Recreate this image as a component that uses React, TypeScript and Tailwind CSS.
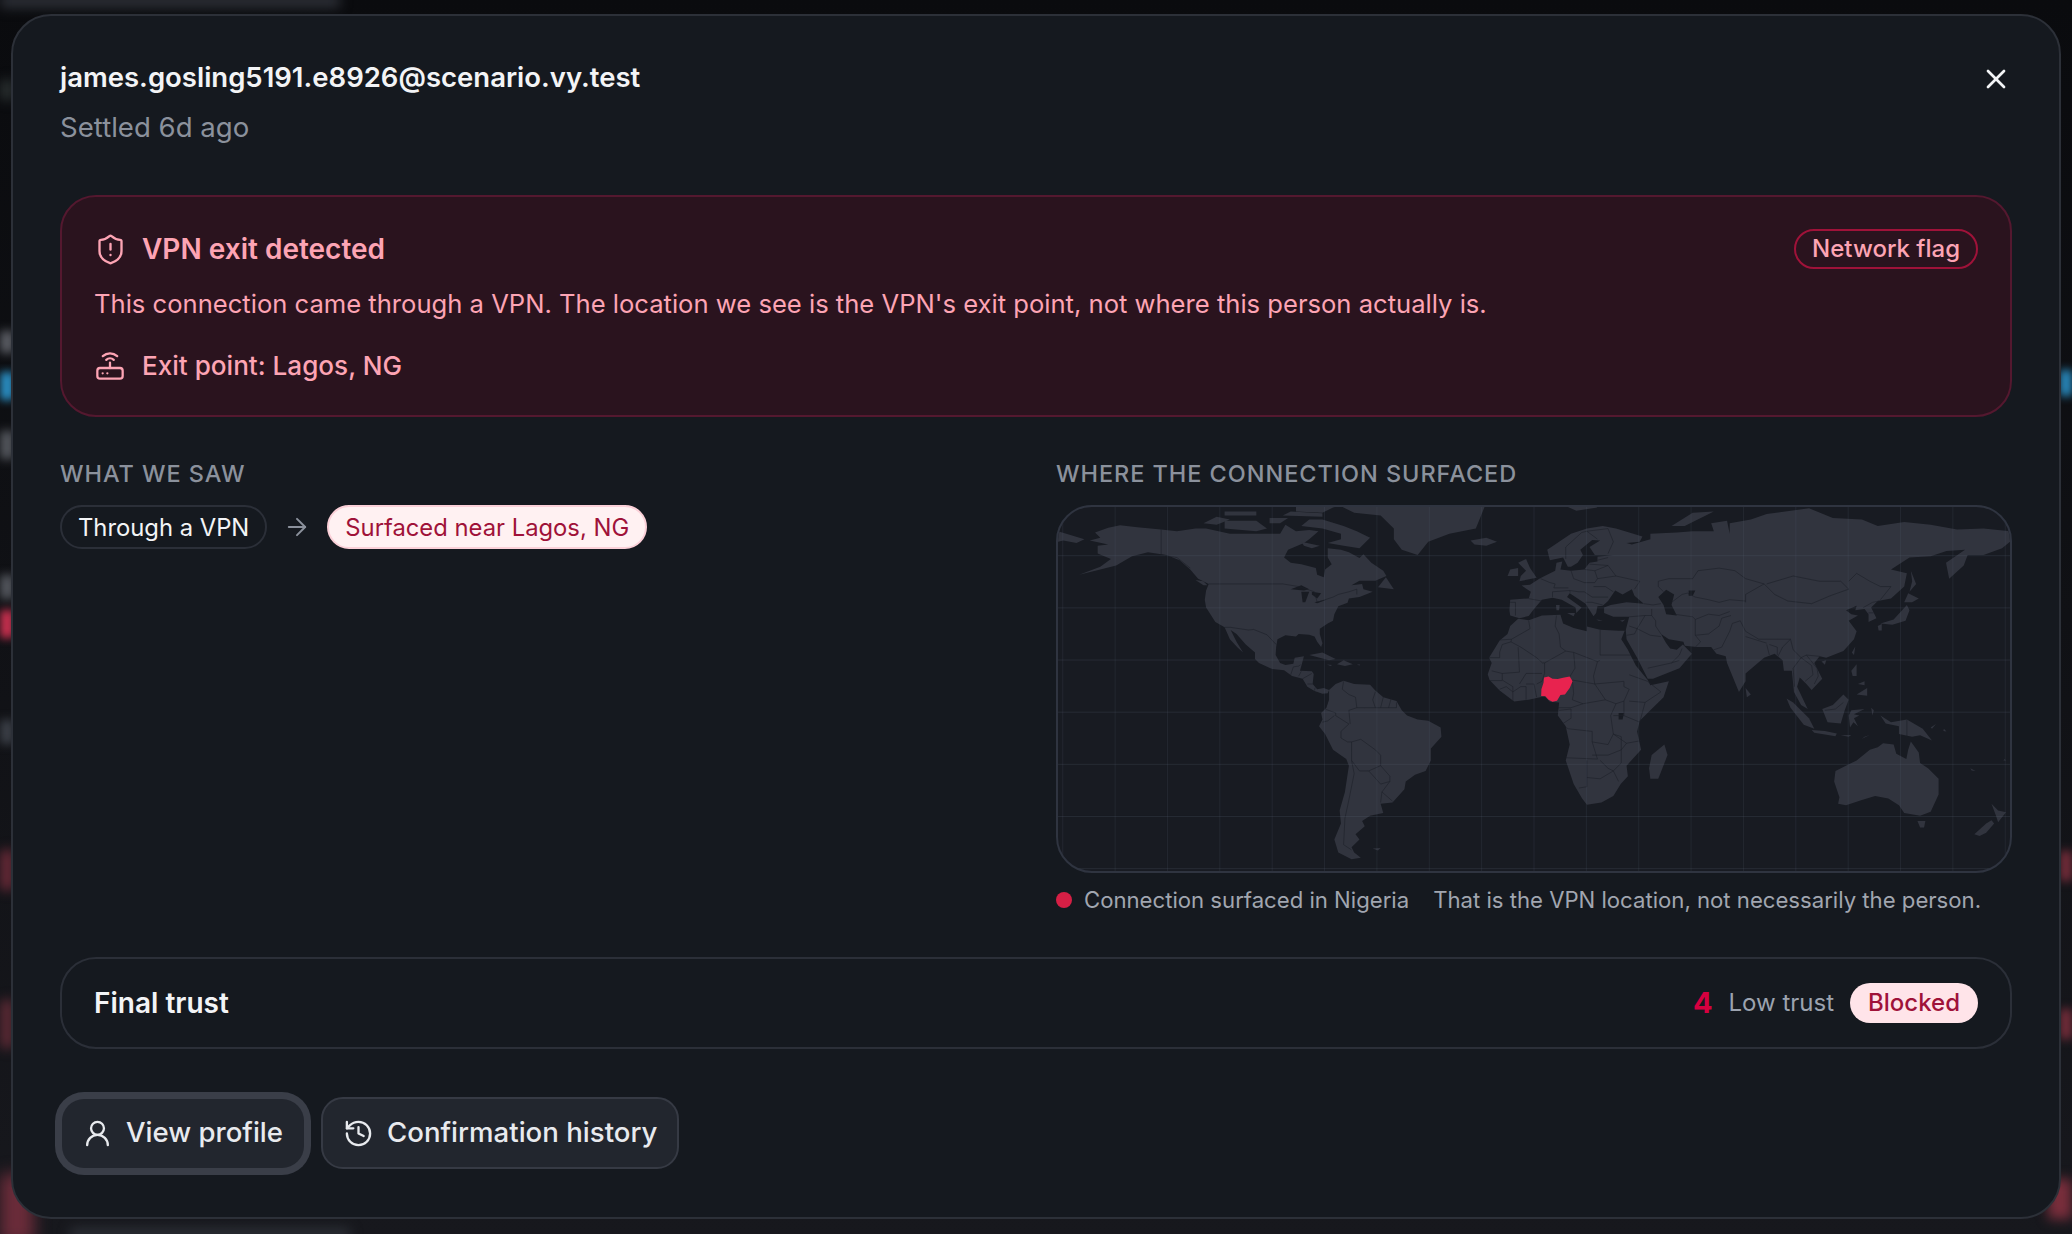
import React from "react";
import { X, ShieldAlert, ArrowRight, UserRound, History } from "lucide-react";

const LAND: string[] = [
  // North America
  "-168,65.5 -164,66.5 -166,68.5 -161,70.3 -156.5,71.3 -150,70.5 -141,69.7 -135,69 -128,70 -124,70 -115,68 -108,68 -96,68 -94,71.5 -90,69 -85,69.5 -81.5,69 -85,66 -87,64.5 -93,62 -94.5,59 -92,57 -88,56.5 -82.5,55 -82,52.5 -79.5,51.5 -79,54.5 -76.5,56.5 -78,59 -78,62.5 -73,62 -70,61 -66,58.8 -64.5,60.3 -61.5,57 -57,54 -55.8,52 -60,50.2 -66,50.2 -69,48.5 -65,49 -64.5,47 -61,46 -66,44 -70,43.5 -70.5,41.8 -74,40.5 -75.5,37.5 -76,35 -78,34 -81,32 -81,30 -80,26.5 -80.5,25 -82,27 -83,29 -85,29.7 -89,30 -90,29 -94,29.5 -97,28 -97.5,25 -97.7,22 -96,19 -94,18.2 -91,18.7 -90.5,21 -87,21.5 -87.8,18.5 -88.5,16 -84,15.8 -83.3,14.8 -83.7,11 -82,9 -79.5,9.5 -77.5,8.7 -78,7.5 -80,7.3 -83,8.3 -85.7,10 -87.5,13 -91.5,14 -94.5,16.2 -99,16.7 -104,19 -105.5,20.5 -105.5,23 -109,26 -112.5,30 -114.7,31.5 -112.5,27 -110,23 -112,24.8 -115,28 -117,32.5 -120.5,34.5 -124,40 -124.5,43 -124,46.5 -123,49 -127,51 -130,54.5 -134,58 -139,60 -146,61 -152,59.5 -158,56 -164,54.5 -172,52.5 -164,55.5 -160,58.5 -165,60.5 -165,63.5 -161,64",
  // Chukotka wrap
  "-180,69 -175,67.5 -170,66 -173,64.5 -178,65.5 -180,65",
  // Greenland
  "-73,78.5 -68,76 -58,75 -53,70 -53,66 -50,62 -44,60 -40,65 -32,68 -22,70 -20,75 -18,80 -30,83 -60,82",
  // Arctic Canada
  "-80,73.5 -72,71 -67,69 -62,66.5 -66,62.5 -72,63.5 -78,64.5 -73,66 -73,68 -80,70 -88,71 -85,73.5",
  "-117,70 -105,69 -101,70 -105,73 -117,73",
  "-90,76.5 -80,76 -76,78 -65,81 -75,83 -90,82",
  "-95,75 -80,74.5 -80,75.8 -92,76.5",
  "-125,72 -120,71.5 -115,73.5 -120,74.5",
  "-117,75 -105,75 -105,76.5 -117,76.5",
  "-100,72 -96,72 -93,74 -100,74",
  "-88,65 -81,63.5 -84,62.5 -87,63.5",
  "-59,47.7 -56,51.5 -53,47",
  "-128,50.5 -125,50 -123.5,48.5 -125,48.5",
  // Caribbean
  "-85,22 -80,23 -75,20.5 -77.5,20",
  "-74.5,18.5 -72,20 -68.5,18.5 -71.5,17.8",
  "-78.3,18.4 -76.3,18.2 -77,17.8",
  "-67,18.4 -65.7,18.4 -66,18",
  // Iceland
  "-24,65.5 -18,66.5 -14,65 -18,63.5 -22.5,64",
  // South America
  "-77.5,8.7 -75,11 -72,12.2 -68,11 -62,10.7 -60,8.5 -57,6 -52,4.5 -50,1 -48,-1 -44,-2.5 -40,-3 -35.3,-5.5 -35,-9 -39,-13.5 -39,-18 -41,-22 -45,-23.5 -48.5,-26 -49,-29 -53.5,-34 -58,-34.5 -57,-38 -62,-39 -65,-41 -64,-43 -67.5,-46 -66,-48 -69,-51 -68,-53 -65.5,-55 -69,-55.5 -74,-53 -75.5,-48 -73,-42 -73.5,-37 -71.5,-30 -70,-20 -71,-17.5 -76,-14 -79,-8 -81.3,-5 -80,-2.5 -80.5,0 -78.5,2 -77.5,5",
  "-61,-51.5 -58,-51.3 -59,-52.2",
  // Africa
  "-6,35.8 -2,35.2 3,37 10,37.3 11,34 15,32.3 20,31 20,32.8 25,31.6 32,31.2 34.3,31.2 33,28 35.5,24 37,21 38.5,18 43,12.5 44,10.5 51,12 49,6 44,1 40,-3 39,-7 40.5,-14 35,-20 35.5,-24 32.8,-27 30,-31.5 25.5,-34 20,-34.8 18.2,-32.5 15,-27 12,-18 13.5,-12 12,-5 9,-1 9.5,4 6,4.3 4,6.3 -2,5 -7.5,4.4 -13,8.5 -16.8,12.5 -17.5,14.7 -16,19 -17,21 -13,27.5 -10,30 -9,33",
  // Madagascar
  "49.3,-12 50.5,-16 47,-25 44,-25 43.5,-21 44.5,-16",
  // Eurasia
  "-9,37 -9.3,39 -9,43 -2,43.5 -1.2,46 -4.7,48.4 -1.5,48.7 2,51 4,52 8,54 8.5,57 10.7,57.5 10,54.5 14,54 19,54.5 21,57 24,57.5 24,59.3 30,60 23,60 21,63 25,65.5 22,65.7 17.5,62 18.5,60 16.5,57 14,55.5 12.8,55.5 11,59 6,58 5,62 14,68 20,70 26,71 31,70 41,67 40,65 35,64.5 37,64 44,66 44,68 54,68.5 60,69 68,69 67,72 73,73 74,68 74,72 82,73.5 88,75.5 104,77.7 113,74 124,73.5 130,71 140,72.5 150,71.5 160,69.7 170,70 180,69 180,65 177,62.5 170,60 164,60 162.5,56 157,51 155.8,57 163,62 156,61.5 150,59.5 142,59 135,54.5 141,53 140,48 135,43.5 130,42.5 127.5,40 129.5,36 126.5,34.5 126.5,37.5 125,39.5 121.5,39 122,40.7 118,39 120,37.5 122.5,37 119,35 122,31 121,28 117,23.5 110.5,21 108,21.5 106,19 109,13 105,8.7 103,11 100.5,13.5 99.5,10 103.5,1.5 101,3 98.3,8 97.5,16 94.5,16 94,20 91,22.5 87,21 80,15 80,12 77.5,8 73,19 72.5,21.5 69,22.5 67,25 61.5,25 57,25.5 56.5,27 51,28 48,30 50,26.5 51.5,24.5 54,24 56.3,26 59.7,22.5 55,17 45,13 43,13 39,21 35,28 34.7,31.5 36,36.5 30,36.5 26.5,38 26.5,40 29,41 35,42 41.5,41.5 38,44.5 37,47 33.5,45 30.7,46.5 28,42.5 26,40.7 24,40.5 23.5,38 22.5,36.7 19.5,41.5 13.5,45.5 12.5,44 18,40 16,38 15.7,40 10.5,43 7,43.7 3,43 0,39.5 -2,36.8 -5.5,36",
  // Europe islands
  "-5.5,50 1,51.3 -1.5,55 -3,58.5 -6,57 -3,54 -5,52",
  "-10,52 -6,52 -6,55 -9,54.5",
  "12.5,38 15.5,38 15,36.7",
  "8.3,41 9.7,41 9.5,39 8.5,39",
  "23.5,35.5 26,35.2 24.5,35",
  "32.5,35 34.5,35.5 33.5,34.6",
  "11,79 16,76.8 24,78 20,80",
  "52,71 57,71 68,76.5 60,76",
  // East Asia islands
  "131,34 136,35.5 141,41 142,39 140.5,35 135.5,33.5",
  "130,33 131.5,33.8 131.5,31.3 130.3,31.3",
  "140,42 141.5,45.5 145.5,43.5 143,42",
  "142,46 143,50 142.5,54 144.5,49",
  "120.2,23 121.5,25.2 121,22",
  "108.7,19.5 110.5,20 110,18.3",
  "120,16 122,18.5 122,14 120.5,14",
  "122,7 126,9.5 126,6.5",
  "122.5,11 125,12 125,10.5",
  "80,9.5 82,7 80.5,6",
  // Maritime SE Asia
  "109,1.5 113,3 117,7 119,5 117.5,1 116,-4 111,-3.5",
  "95.5,5.5 98,4 104,-2 106,-6 102,-4.5 97,2",
  "105,-6.5 110,-6.8 114.5,-7.8 114,-8.8 106,-7.5",
  "119.5,-5.5 119,-1 120,1 125,1.5 121,-0.5 123,-1 121,-2 122.5,-5 120.8,-3.5",
  "131,-1 135,-3.5 141,-2.5 147,-6 150.5,-10.5 146,-8.5 143,-9 138,-8 138,-5 133,-4",
  "124,-9.8 127,-8.4 125,-9",
  "116,-8.5 120,-8.4 119,-9",
  "127.5,2 128.5,1 128,-1",
  "150,-5.5 152,-4.2 150.5,-6",
  "155,-6 156,-7 154.8,-6.8",
  // Oceania
  "114,-22 113.5,-26 115.5,-32 115,-34.5 118,-35 124,-33 129,-31.5 134,-32.5 138,-35 140,-38 146,-39 150,-37.5 153,-31 153,-25 149,-21 146,-19 145.5,-15 142.5,-10.8 141.5,-14 140.8,-17.5 137,-15.5 136,-12 132,-11.5 130,-13 127,-14 122,-18 117,-20.5",
  "145,-41 148,-41 147.5,-43.5 146,-43.5",
  "166.5,-46 171,-42 173,-40.7 174,-42 171,-45.5 168.5,-46.7",
  "173,-34.5 175.5,-37 178.5,-37.7 175.5,-41.5 174.7,-39",
  "178,-17.5 178.5,-18 177.5,-18",
  "165,-21 167,-22 165.5,-21.8",
];

const LAKES: string[] = [
  "50,46.8 53,45 52,41 54,37 50,37.5 49,41 47,44",
  "58.5,46.5 61,46.5 60,44.5 58.5,44.5",
  "-92,47 -88,48.5 -85,47 -87,46.5",
  "-88,46 -85,46 -86.5,42 -87.5,42",
  "-84,46 -80.5,45.5 -82,43.5 -84,45",
  "-83,42 -79,43 -79,42.8 -82,41.7",
  "32,0 34,0 33.5,-2.5 32,-2.5",
];

const BORDERS: string[] = [
  "-123,49 -95,49 -89,48 -83,46 -82,42 -76,44 -74,45 -70,46 -67,47 -67,45",
  "-141,69.7 -141,60 -135,59 -130,55",
  "-117,32.5 -114.7,32.5 -108,31.5 -106,31.7 -101,29.7 -97.5,26",
  "-92,14.5 -91,17.5 -89,17.8 -88.3,18.3",
  "-89,14 -88,15.8",
  "-87.5,13 -84,15",
  "-85.7,11 -83.7,11",
  "-83,8.5 -82.8,9.6",
  "-72,12 -72.5,9 -70,7 -67.5,6 -67,2",
  "-78.8,1.4 -75,0 -75,-1 -70,-4.2",
  "-67,2 -70,1 -69.5,-4.2",
  "-80,-3.5 -78,-3 -75.5,-1",
  "-70,-4.2 -73,-7 -73,-9.5 -70.5,-11 -69,-11",
  "-69,-11 -65.5,-10 -60,-14 -58,-16 -58,-20 -62.5,-22 -66,-22 -69,-18 -69,-15 -69,-11",
  "-69,-18 -68,-23 -70,-33 -71.5,-40 -72,-50 -69,-52",
  "-60,8 -61,5 -60,2 -64,2 -67,2",
  "-57,6 -58,2",
  "-54,5.5 -55,2",
  "-52,4 -52,2",
  "-60,2 -52,2",
  "-58,-20 -54.5,-24 -54.5,-26 -58,-27 -62.5,-22",
  "-57.5,-30 -53.5,-33.5",
  "-57.5,-30 -58,-34",
  "-54.5,-26 -57.5,-30",
  "-2,35 -1.5,32 -8.5,28 -13,27.7",
  "-8.5,28 -8.7,27 -5,25",
  "-17,21 -13,21 -13,23 -12,26 -8.7,27",
  "-16,16 -12,15 -5.5,15.5 -6,25",
  "-5,25 1,21 3.2,19 4,19 12,23.5",
  "8.5,37 8,33 9.5,30 10,25 12,23.5",
  "25,31.5 25,22",
  "12,23.5 15,23 24,19.5 25,20",
  "25,22 37,22",
  "4,19 4,15 3,12",
  "15,23 15.5,17 13.5,13.7",
  "24,19.5 22.5,14 23,11",
  "-5.5,11 -3,15 0,15 3,15",
  "-12,15 -12,12.5 -8,10 -8,4.5",
  "-16.8,12.3 -12,12.3",
  "-13,9 -10.5,10 -8,8",
  "-8,8 -5,10 -3,10 -3,5",
  "-3,11 0,11 1,6",
  "1,11 3,12",
  "14.5,12.5 15,7.5 14.5,5 18.5,3.5 27,5 23,11 14.5,12.5",
  "27,5 31,3.5 34,4.5 36,9 34,10 34,12 23,11",
  "12,-5.5 13,-6 22,-7 22,-11 28,-12 30,-8 29,-1 31,3.5",
  "9,2 14,2 18.5,3.5",
  "9.5,1 14,1.5 14,-2 11,-4",
  "36,14.5 43,12 48,8 42,4 36,4.5",
  "34,4.5 34,-1 40,-3.5 42,4",
  "30,-1 34,-1",
  "30,-8 35,-11.5 40.5,-10.5",
  "12,-17 24,-17.5 22,-11",
  "22,-16 28,-16 33,-14 33,-9 30,-8",
  "33,-14 35,-11.5",
  "30,-22 33,-19 33,-14",
  "17,-28.5 20,-28 20,-24.5 25,-25 30,-22 32,-26",
  "20,-18 20,-24.5",
  "25,-18 28,-21 30,-22",
  "12,58.5 12,63 18,68.5 20,69 28,70",
  "28,70 30,65 28,60.5",
  "20,69 24,66",
  "-2,43.4 3,42.5",
  "-9,42 -7,42 -7,37",
  "2.5,51 6,49.5 8,49 7.5,47.5 10,47.5 13,47.5",
  "7,44 7,46",
  "14,54 15,51",
  "15,51 19,49.5 23,49.5 24,51 23,54 19,54.5",
  "7,46 13.5,46.5 13.7,45.7",
  "13.5,46.5 17,46 19,46 22,44 28,44",
  "19.5,42 22,42 26,41",
  "24,51 31,52 40,50 38,47",
  "22.5,48 27,48 30,46",
  "23,54 28,56 31,52",
  "21,56.5 28,56",
  "24,58 28,59",
  "49,46 47,48 47,50 51,51 60,51 62,54 70,55 76,54 80,51 87,49",
  "87,49 80,45 80,42",
  "52,42 56,45 58,45.5 61,44 66,43 70,42 74,43 80,42.5",
  "53,37.5 60,36.5 61,35.5 66,37.5 70,37 74,38.5",
  "44.5,37 46,35 46,33 48,30",
  "44.5,37 44.5,39.5",
  "36,36.5 42,37 44.5,37",
  "41.5,41.5 45,41 48,41.5",
  "39,32 44,29.5 48,29",
  "43,17 52,19 55,20",
  "52,19 55,22 56,24.5",
  "36,33 39,32 42,37",
  "35,29.5 38,30 39,32",
  "61,29.5 66,30 70,33 71,36 74.5,37",
  "61,25 63,27 61,29.5 61,35.5",
  "68,24 71,25 74,31 75,34 78,35",
  "78,35 80,31 85,28 88,28 92,28 97,28",
  "80,29 88,26.5",
  "88,26 89,22",
  "89,26 92,25 92,22",
  "92,21 94,25 97,28 98,24 101,21 98,17 98.5,10",
  "101,21 105,18 105.5,14.5 102.5,12",
  "103,22 107,17 107.5,14 106,11",
  "101,21 103,22 108,21.5",
  "87,49 91,45 96,42.5 105,41.5 112,44.5 119,47 116,50 108,50 98,52 88,49",
  "119,50 122,53 127,50 131,48 135,48 131,43",
  "124.5,40 128,42 130.5,42.5",
  "126.5,38 128.5,38",
  "141,-2.5 141,-9",
  "110,1 114,1.5 117,4",
];

const NIGERIA = "2.7,6.4 2.8,9 3.6,11.5 3.8,13.5 5.5,13.8 7,13 9,12.9 11,13.4 13.5,13.8 14.6,12 13.5,9.5 11.7,7 10,6.8 8.7,4.6 7,4.3 5.5,5 4.3,6.3";

const GRID_V = Array.from({ length: 19 }, (_, i) => -178.2 + 19.8 * i);
const GRID_H = [59.7, 39.9, 20.1, 0.3, -19.5, -39.3, -59.1];

function WorldMap() {
  return (
    <svg viewBox="-180 -78.2 360 138.2" preserveAspectRatio="none" className="block h-full w-full">
      <g transform="scale(1 -1)">
        {LAND.map((p, i) => (
          <polygon key={i} points={p} fill="#31343e" />
        ))}
        {LAKES.map((p, i) => (
          <polygon key={i} points={p} fill="#181b22" />
        ))}
        {BORDERS.map((p, i) => (
          <polyline key={i} points={p} fill="none" stroke="#1d2028" strokeWidth="0.6" vectorEffect="non-scaling-stroke" />
        ))}
        <polygon points={NIGERIA} fill="#e8234f" />
        {GRID_V.map((x) => (
          <line key={x} x1={x} x2={x} y1={-70} y2={90} stroke="#5b6478" strokeOpacity="0.17" strokeWidth="1" vectorEffect="non-scaling-stroke" />
        ))}
        {GRID_H.map((y) => (
          <line key={y} x1={-180} x2={180} y1={y} y2={y} stroke="#5b6478" strokeOpacity="0.22" strokeWidth="1" vectorEffect="non-scaling-stroke" />
        ))}
      </g>
    </svg>
  );
}

function RouterIcon() {
  return (
    <svg viewBox="0 0 24 24" fill="none" stroke="currentColor" strokeWidth="1.7" strokeLinecap="round" strokeLinejoin="round" className="h-[32px] w-[32px] shrink-0">
      <rect x="2.5" y="13.5" width="19" height="8" rx="2" />
      <path d="M6.5 17.5h.01" />
      <path d="M10 17.5h.01" />
      <path d="M12 13.5V9.5" />
      <path d="M9.2 7.4a4 4 0 0 1 5.6 0" />
      <path d="M6.6 4.6a8 8 0 0 1 10.8 0" />
    </svg>
  );
}

export default function App() {
  return (
    <div className="relative h-[1234px] w-full overflow-hidden bg-gradient-to-b from-[#0a0b0e] via-[#101115] to-[#17181d] pt-[14px] font-['Inter',sans-serif]">
      <div className="absolute left-0 top-[-6px] h-[14px] w-[340px] bg-[#2c2f36] blur-[6px]" />
      <div className="absolute bottom-[-6px] left-[70px] h-[12px] w-[280px] bg-[#2c2f36] blur-[6px]" />
      <div className="absolute left-0 top-[80px] h-[20px] w-[14px] bg-[#2a3030] blur-[6px]" />
      <div className="absolute left-0 top-[331px] h-[22px] w-[14px] bg-[#5c5f66] blur-[5px]" />
      <div className="absolute left-0 top-[372px] h-[28px] w-[14px] bg-[#2a8fc4] blur-[4px]" />
      <div className="absolute left-0 top-[431px] h-[28px] w-[14px] bg-[#55585e] blur-[5px]" />
      <div className="absolute left-0 top-[575px] h-[24px] w-[14px] bg-[#55585f] blur-[5px]" />
      <div className="absolute left-0 top-[610px] h-[28px] w-[14px] bg-[#c9304f] blur-[4px]" />
      <div className="absolute left-0 top-[720px] h-[24px] w-[14px] bg-[#3c4048] blur-[5px]" />
      <div className="absolute left-0 top-[850px] h-[40px] w-[14px] bg-[#6b2a38] blur-[6px]" />
      <div className="absolute left-0 top-[1000px] h-[48px] w-[14px] bg-[#5e2a35] blur-[6px]" />
      <div className="absolute bottom-[-10px] left-0 h-[70px] w-[34px] bg-[#6b2c3a] blur-[8px]" />
      <div className="absolute right-0 top-[370px] h-[26px] w-[12px] bg-[#2a8fc4] blur-[4px]" />
      <div className="absolute right-0 top-[851px] h-[30px] w-[12px] bg-[#7a2e3c] blur-[5px]" />
      <div className="absolute right-0 top-[1009px] h-[30px] w-[12px] bg-[#7a2e3c] blur-[5px]" />
      <div className="absolute bottom-[15px] right-0 h-[40px] w-[24px] bg-[#7a2e3c] blur-[6px]" />

      <div className="relative mx-[11px] flex h-[1205px] flex-col rounded-[40px] border-2 border-[#2c3038] bg-[#15191f] px-[47px] pt-[41px]">
        <div className="flex items-start justify-between">
          <div>
            <div className="text-[27.5px] font-semibold leading-[40px] text-[#f3f4f6]">james.gosling5191.e8926@scenario.vy.test</div>
            <div className="mt-[10px] text-[27.6px] leading-[40px] text-[#8b919c]">Settled 6d ago</div>
          </div>
          <X className="mr-[0px] mt-[6px] h-[32px] w-[32px] text-[#f3f4f6]" strokeWidth={2} />
        </div>

        <div className="mt-[48px] flex h-[222px] flex-col rounded-[36px] border-2 border-[#54182f] bg-[#2a131e] px-[32px] pt-[32px] text-[#fda4b4]">
          <div className="flex h-[40px] items-center justify-between">
            <div className="flex items-center gap-[15px]">
              <ShieldAlert className="h-[33px] w-[33px]" strokeWidth={1.7} />
              <span className="text-[28px] font-semibold">VPN exit detected</span>
            </div>
            <span className="flex h-[40px] items-center rounded-full border-2 border-[#9f1239] px-[16px] text-[24px] font-medium">Network flag</span>
          </div>
          <div className="mt-[15px] text-[25.6px] leading-[40px]">This connection came through a VPN. The location we see is the VPN's exit point, not where this person actually is.</div>
          <div className="mt-[22px] flex items-center gap-[16px]">
            <RouterIcon />
            <span className="text-[26.1px] font-medium">Exit point: Lagos, NG</span>
          </div>
        </div>

        <div className="mt-[42px] grid grid-cols-2 gap-[40px]">
          <div>
            <div className="text-[23.5px] font-medium leading-[30px] tracking-[0.04em] text-[#8b919c]">WHAT WE SAW</div>
            <div className="mt-[16px] flex items-center gap-[16px]">
              <span className="flex h-[44px] items-center rounded-full border-2 border-[#2b2f38] px-[16px] pt-[1px] text-[23.8px] text-[#f3f4f6]">Through a VPN</span>
              <ArrowRight className="h-[28px] w-[28px] text-[#8b919c]" strokeWidth={1.7} />
              <span className="flex h-[44px] items-center rounded-full border-2 border-[#fbd0d8] bg-[#fff1f2] px-[16px] pt-[1px] text-[23.8px] text-[#9f1239]">Surfaced near Lagos, NG</span>
            </div>
          </div>
          <div>
            <div className="text-[23.5px] font-medium leading-[30px] tracking-[0.04em] text-[#8b919c]">WHERE THE CONNECTION SURFACED</div>
            <div className="mt-[16px] h-[368px] overflow-hidden rounded-[36px] border-2 border-[#2f3440] bg-[#181b22]">
              <WorldMap />
            </div>
            <div className="mt-[12px] flex items-center text-[22.15px] leading-[30px] text-[#a1a6b0]">
              <span className="mr-[12px] h-[16px] w-[16px] rounded-full bg-[#d61f45]" />
              <span>Connection surfaced in Nigeria</span>
              <span className="ml-[24px]">That is the VPN location, not necessarily the person.</span>
            </div>
          </div>
        </div>

        <div className="mt-[42px] flex h-[92px] items-center justify-between rounded-[36px] border-2 border-[#2b2f38] px-[32px]">
          <span className="text-[28px] font-semibold text-[#f3f4f6]">Final trust</span>
          <div className="flex items-center gap-[16px]">
            <span className="text-[29px] font-bold text-[#d6003f]">4</span>
            <span className="text-[24px] text-[#9ca3af]">Low trust</span>
            <span className="flex h-[40px] items-center rounded-full bg-[#ffe4e9] px-[18px] text-[24px] font-medium text-[#9f1239]">Blocked</span>
          </div>
        </div>

        <div className="mt-[48px] flex items-center gap-[17px] pl-[2px]">
          <button className="flex h-[69px] items-center gap-[13px] rounded-[22px] bg-[#22262e] px-[20px] pr-[21px] text-[27.6px] font-medium text-[#e8eaee] ring-[7px] ring-[#3a3e48]">
            <UserRound className="h-[31px] w-[31px]" strokeWidth={1.8} />
            View profile
          </button>
          <button className="flex h-[72px] items-center gap-[13px] rounded-[22px] border-2 border-[#363a44] bg-[#22262e] px-[20px] text-[27.6px] font-medium text-[#e8eaee]">
            <History className="h-[31px] w-[31px]" strokeWidth={1.8} />
            Confirmation history
          </button>
        </div>
      </div>
    </div>
  );
}
